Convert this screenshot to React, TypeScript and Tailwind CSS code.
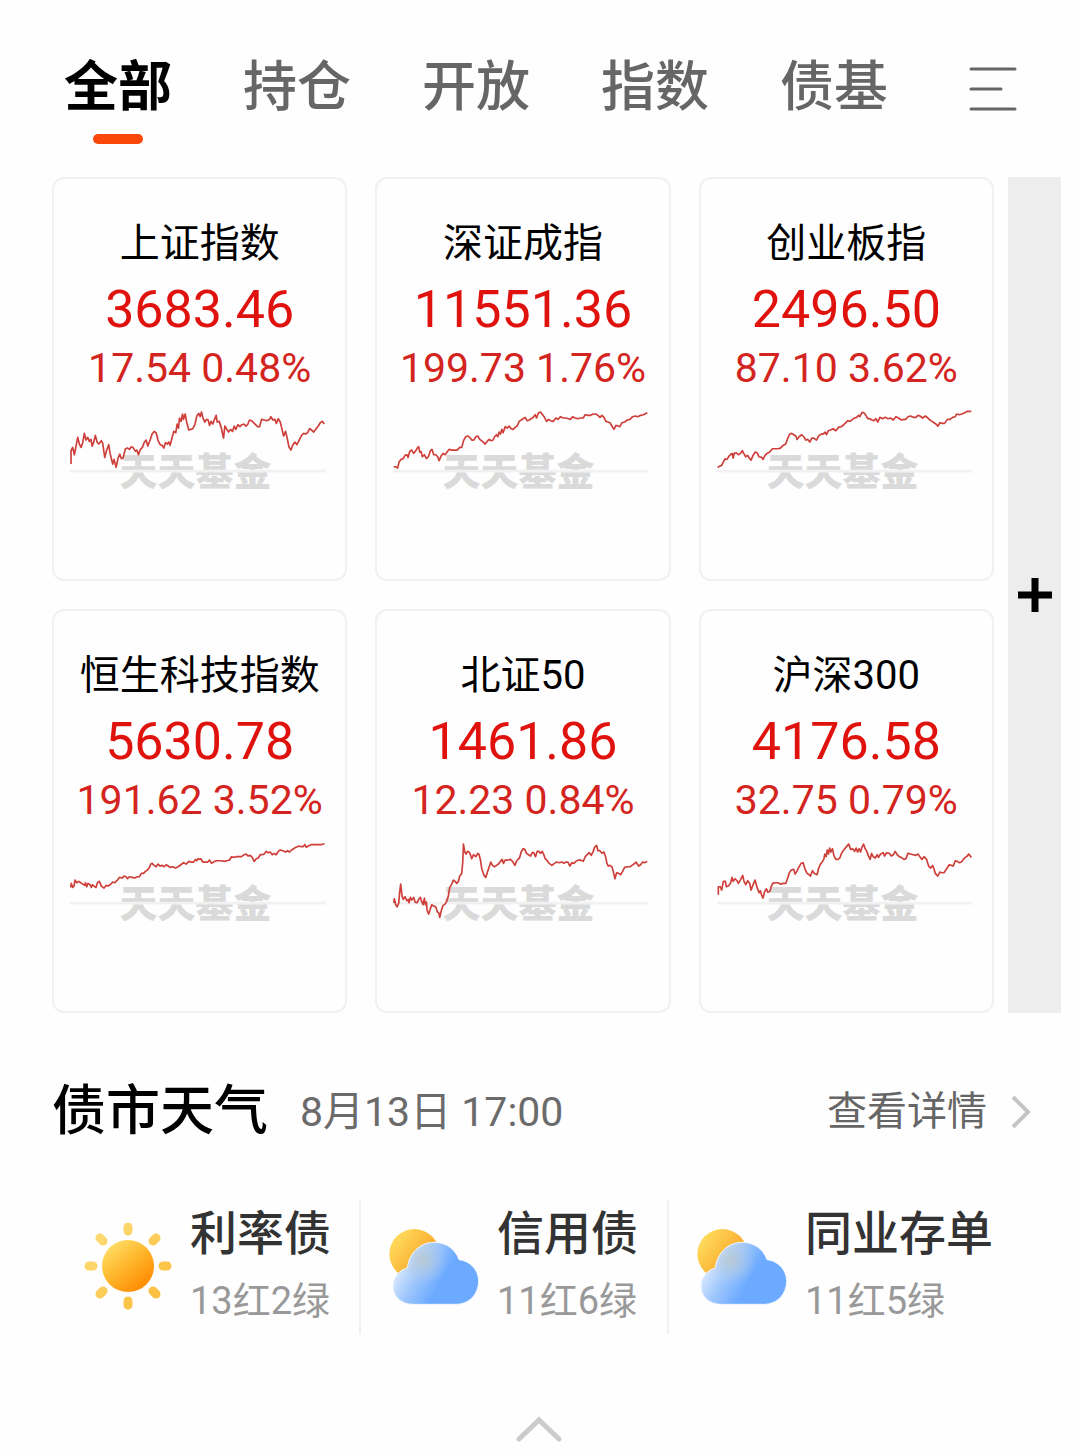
import React from "react";

interface IndexCard {
  name: string;
  value: string;
  change: string;
  points: string;
}

const tabs = ["全部", "持仓", "开放", "指数", "债基"];

const indexCards: IndexCard[] = [
  {
    name: "上证指数",
    value: "3683.46",
    change: "17.54 0.48%",
    points:
      "3,222 3,182 8,172 13,194 18,168 23,142 28,162 33,172 38,158 43,130 48,150 53,142 58,154 63,148 66,168 71,156 76,136 81,156 86,162 94,152 98,160 104,202 110,180 116,164 120,190 124,206 128,222 132,208 138,232 144,204 149,192 154,206 159,204 166,176 172,174 178,178 184,170 190,174 196,184 200,180 205,194 211,178 217,172 222,158 228,150 233,168 240,150 246,132 252,124 258,128 264,152 270,164 276,166 281,174 286,158 292,162 296,156 300,166 305,146 311,124 317,128 321,102 325,114 328,84 333,94 337,72 340,88 345,72 350,98 356,120 362,118 368,116 374,104 380,78 386,70 390,80 394,66 399,86 404,96 409,88 414,90 418,106 423,94 428,102 433,88 438,76 441,96 447,94 453,112 456,126 460,144 464,108 470,118 475,126 481,118 487,124 492,108 497,118 503,104 509,110 515,104 521,102 527,108 532,104 538,90 544,92 550,98 556,104 562,110 568,110 574,88 582,90 590,92 598,88 602,80 608,90 614,88 618,100 624,86 630,96 634,112 640,138 646,124 652,150 656,170 662,180 668,164 674,156 680,164 686,152 694,136 700,130 706,132 712,128 718,116 724,120 730,126 736,118 744,108 750,98 756,94 762,102",
  },
  {
    name: "深证成指",
    value: "11551.36",
    change: "199.73 1.76%",
    points:
      "2,230 8,230 14,234 18,216 24,208 30,206 36,196 42,194 45,202 50,184 56,180 62,190 68,182 74,172 77,170 80,186 84,184 88,200 94,194 100,206 106,200 112,182 117,178 122,194 128,194 134,200 138,212 144,198 150,190 156,194 162,186 168,178 176,180 184,180 192,180 200,172 206,172 212,150 218,140 224,138 230,142 236,150 242,150 248,140 254,138 260,148 268,154 276,162 282,154 288,148 294,152 300,150 304,140 310,134 314,140 318,126 322,132 326,118 330,128 336,110 342,114 348,108 354,116 360,118 366,112 372,108 378,94 384,90 390,86 396,82 402,92 408,90 414,86 420,82 426,74 430,84 436,68 442,66 448,74 454,82 460,94 466,88 472,92 480,94 488,84 494,88 502,80 510,84 518,84 526,86 532,88 538,80 546,84 554,86 562,84 570,84 576,74 584,76 592,76 600,72 608,72 614,76 620,82 626,76 632,82 638,94 644,96 650,98 656,108 662,118 668,106 674,108 680,110 686,98 694,96 702,90 710,88 718,80 726,78 734,80 742,76 750,74 762,68",
  },
  {
    name: "创业板指",
    value: "2496.50",
    change: "87.10 3.62%",
    points:
      "2,232 8,228 14,226 20,214 24,206 30,208 36,198 42,192 46,190 48,204 52,190 58,188 64,194 70,190 76,182 80,190 86,200 92,196 98,206 102,210 108,196 114,186 120,188 126,200 134,202 138,208 144,196 150,190 158,186 166,176 174,176 182,176 190,174 198,166 206,162 212,144 218,132 224,130 230,134 236,138 240,148 246,140 254,134 260,140 266,150 272,148 278,156 284,144 290,144 298,150 304,138 312,132 318,132 324,126 328,134 334,122 340,120 348,116 356,122 364,112 372,110 380,104 386,98 392,92 398,94 406,88 412,84 418,82 424,76 428,80 434,68 440,68 446,76 452,86 458,86 464,90 470,92 476,86 482,96 488,82 496,86 504,82 512,86 520,84 528,90 536,80 544,84 552,90 560,88 566,88 572,80 580,78 588,82 596,82 602,76 608,78 616,84 624,78 632,84 638,90 644,94 650,98 656,102 662,108 668,98 674,100 682,100 690,88 698,88 706,82 714,80 718,72 726,74 734,72 742,68 750,64 762,64",
  },
  {
    name: "恒生科技指数",
    value: "5630.78",
    change: "191.62 3.52%",
    points:
      "2,196 4,184 8,196 12,192 15,174 20,182 26,178 32,182 38,186 44,190 46,182 50,194 54,184 60,188 64,196 68,188 74,194 78,196 82,182 88,178 94,192 102,198 108,190 114,192 120,188 128,180 134,182 142,174 148,166 156,168 162,162 168,164 172,170 178,164 186,166 194,168 202,164 208,164 214,154 220,154 226,148 232,144 238,136 242,126 246,124 252,130 258,134 264,126 270,132 276,130 282,134 288,128 294,132 300,136 308,134 316,138 324,134 332,128 340,122 348,126 356,118 362,120 370,120 376,112 380,116 384,110 388,112 392,110 398,120 404,120 412,120 418,114 424,124 430,120 438,116 446,116 454,116 462,118 470,116 478,114 484,104 490,106 498,104 506,104 514,104 522,98 528,96 534,102 540,100 546,106 552,118 558,110 564,108 570,98 576,98 582,96 588,88 594,92 600,90 606,98 612,94 618,98 624,88 630,84 638,86 646,90 652,86 658,90 664,84 670,80 676,76 682,74 686,72 692,74 698,74 704,68 708,76 714,72 722,68 732,68 742,68 752,68 760,66 762,64",
  },
  {
    name: "北证50",
    value: "1461.86",
    change: "12.23 0.84%",
    points:
      "2,242 4,230 8,248 12,254 17,244 20,210 23,186 27,222 31,232 36,224 42,236 46,232 48,242 52,226 56,234 62,226 66,240 72,242 78,230 82,226 86,238 90,248 94,228 97,248 100,240 102,264 107,276 112,260 116,248 122,252 128,254 133,270 137,272 140,286 145,264 150,250 156,246 161,238 166,220 170,196 176,186 181,174 186,178 191,184 196,178 200,162 206,154 209,120 211,66 215,90 219,96 223,88 228,90 232,98 236,110 241,98 248,104 254,94 258,98 262,114 266,140 270,152 273,160 278,166 283,150 289,132 293,120 298,130 304,134 310,130 316,126 322,118 327,112 331,124 336,114 344,114 352,112 358,118 365,130 370,118 374,112 379,108 384,90 390,80 395,82 400,94 406,98 412,102 417,92 422,92 427,104 432,88 437,88 442,94 447,88 452,98 456,110 462,116 468,124 476,130 484,124 490,120 498,122 506,120 512,124 518,120 524,120 530,132 536,122 542,124 548,118 556,114 562,114 570,118 576,104 582,98 588,92 594,100 600,88 604,76 610,70 614,86 620,86 626,94 632,90 637,104 641,124 645,132 650,130 656,134 660,148 665,170 670,152 676,154 682,158 688,148 694,136 702,134 710,134 716,130 722,126 728,120 736,132 742,128 748,120 754,122 762,118",
  },
  {
    name: "沪深300",
    value: "4176.58",
    change: "32.75 0.79%",
    points:
      "4,218 4,194 10,194 14,204 19,178 25,178 28,194 34,192 40,184 45,166 48,178 54,170 60,176 64,184 70,174 77,160 81,178 86,188 92,176 98,184 102,204 108,188 114,174 120,196 126,212 130,206 134,220 138,228 142,210 148,200 152,210 158,208 163,192 167,184 174,182 182,182 190,186 198,184 206,184 211,170 216,154 222,144 230,142 234,156 240,146 246,134 252,124 258,122 264,142 270,154 276,158 280,162 286,146 292,154 300,158 304,140 310,126 315,120 320,112 323,96 327,104 330,84 334,96 337,78 341,90 346,80 350,100 356,112 362,112 368,108 373,94 378,86 386,76 391,70 395,66 400,82 406,80 412,88 417,78 421,90 426,80 430,90 435,74 439,66 444,80 449,88 453,100 459,112 463,94 468,104 474,108 480,98 484,106 490,96 498,92 502,102 508,92 516,94 522,102 528,98 534,88 540,98 546,104 552,106 560,112 566,110 572,94 580,96 588,98 596,100 602,96 608,104 614,112 620,104 628,112 634,132 640,138 646,130 650,140 654,154 661,162 668,150 674,152 680,152 688,140 696,128 702,130 708,132 714,116 720,118 726,122 732,120 738,112 744,106 750,102 754,96 762,106",
  },
];

const forecasts = [
  { name: "利率债", summary: "13红2绿", icon: "sun" },
  { name: "信用债", summary: "11红6绿", icon: "cloud" },
  { name: "同业存单", summary: "11红5绿", icon: "cloud" },
];

function Sparkline({ points }: { points: string }) {
  return (
    <svg viewBox="0 0 777 330" className="block w-full" aria-hidden="true">
      <text x="148" y="286" fontSize="114" className="fill-[#dadada] font-black">
        天天基金
      </text>
      <path d="M0 243H766" stroke="#f1f1f1" strokeWidth="8" />
      <polyline points={points} fill="none" stroke="#cf3f3a" strokeWidth="5" strokeLinejoin="round" />
    </svg>
  );
}

function SunIcon() {
  return (
    <svg viewBox="0 0 88 88" className="size-[88px] shrink-0" aria-hidden="true">
      <defs>
        <linearGradient id="sun-core" x1="0.15" y1="0.1" x2="0.8" y2="0.9">
          <stop offset="0" stopColor="#ffdd63" />
          <stop offset="0.5" stopColor="#ffb52b" />
          <stop offset="1" stopColor="#ff8c00" />
        </linearGradient>
        <linearGradient id="sun-rays" gradientUnits="userSpaceOnUse" x1="0" y1="0" x2="88" y2="88">
          <stop offset="0" stopColor="#fde07c" />
          <stop offset="1" stopColor="#fbb935" />
        </linearGradient>
      </defs>
      <path
        d="M44 4v4M44 78v4M5 43h4M79 43h4M16 15l3 3M69 68l3 3M72 15l-3 3M19 68l-3 3"
        stroke="url(#sun-rays)"
        strokeWidth="9"
        strokeLinecap="round"
      />
      <circle cx="44" cy="43" r="26" fill="url(#sun-core)" />
    </svg>
  );
}

function CloudIcon() {
  const id = React.useId();
  const cloud =
    "M130 225H-1C-37 225 -60 200 -60 171C-60 145 -43 123 -17 116C-12 72 21 39 63 39C98 39 126 58 138 91C170 94 197 121 197 155C197 195 168 225 130 225Z";
  return (
    <svg viewBox="-72 0 270 226" className="h-[76px] w-[90px] shrink-0" aria-hidden="true">
      <defs>
        <linearGradient id={`${id}-sun`} x1="0.1" y1="0.2" x2="0.9" y2="0.8">
          <stop offset="0" stopColor="#ffda5c" />
          <stop offset="1" stopColor="#f79a1c" />
        </linearGradient>
        <linearGradient id={`${id}-cloud`} gradientUnits="userSpaceOnUse" x1="-50" y1="90" x2="80" y2="165">
          <stop offset="0" stopColor="#eaf3ff" />
          <stop offset="0.5" stopColor="#a3c9fc" />
          <stop offset="1" stopColor="#6caaff" />
        </linearGradient>
        <radialGradient id={`${id}-glow`} gradientUnits="userSpaceOnUse" cx="30" cy="92" r="75">
          <stop offset="0" stopColor="#b9c8ce" stopOpacity="0.9" />
          <stop offset="1" stopColor="#b4cdec" stopOpacity="0" />
        </radialGradient>
      </defs>
      <circle cx="4" cy="74" r="75" fill={`url(#${id}-sun)`} />
      <path d={cloud} fill={`url(#${id}-cloud)`} />
      <path d={cloud} fill={`url(#${id}-glow)`} stroke="#f1f7ff" strokeWidth="3" />
    </svg>
  );
}

export default function App() {
  return (
    <main className="min-h-screen bg-[#fefefe] font-[Roboto,'Noto_Sans_CJK_SC',sans-serif] text-black">
      {/* Category tabs */}
      <nav className="flex items-start gap-[71px] pt-[54px] pr-[60px] pl-16 text-[54px] leading-[68px]">
        {tabs.map((tab, idx) => (
          <button
            key={tab}
            type="button"
            className={idx === 0 ? "flex flex-col items-center gap-3 font-bold" : "font-medium text-[#666]"}
          >
            {tab}
            {idx === 0 && <span className="h-[10px] w-[50px] rounded-full bg-[#fb4709]" />}
          </button>
        ))}
        <button type="button" aria-label="菜单" className="ml-auto flex h-[70px] items-center">
          <svg viewBox="0 0 48 44" className="h-11 w-12" aria-hidden="true">
            <path
              d="M2 2h44M2 22h30M2 42h44"
              stroke="#666"
              strokeWidth="3"
              strokeLinecap="round"
            />
          </svg>
        </button>
      </nav>

      {/* Index cards */}
      <section className="mt-[33px] flex gap-[14px] pr-4 pl-[52px]">
        <div className="grid flex-1 grid-cols-3 gap-7">
          {indexCards.map((card) => (
            <article
              key={card.name}
              className="rounded-xl border-2 border-[#f1f1f1] px-4 pt-9 pb-[79px] text-center whitespace-nowrap"
            >
              <h3 className="text-[40px] leading-[58px]">{card.name}</h3>
              <p className="text-[52px] leading-[74px] text-[#e0120d]">{card.value}</p>
              <p className="text-[41px] leading-[43px] text-[#d42420]">{card.change}</p>
              <Sparkline points={card.points} />
            </article>
          ))}
        </div>
        <button type="button" aria-label="添加" className="flex w-[53px] items-center justify-center bg-[#ededed]">
          <svg viewBox="0 0 34 34" className="size-[34px]" aria-hidden="true">
            <path d="M17 0v34M0 17h34" stroke="#000" strokeWidth="7" />
          </svg>
        </button>
      </section>

      {/* Bond market weather */}
      <section className="pr-[46px] pl-[52px]">
        <header className="mt-[65px] flex items-center leading-[68px]">
          <h2 className="text-[54px] font-medium">债市天气</h2>
          <time className="ml-8 text-[41px] text-[#6b6b6b]">8月13日 17:00</time>
          <a href="#detail" className="ml-auto flex items-center gap-6 text-[40px] text-[#666]">
            查看详情
            <svg viewBox="0 0 20 34" className="h-[34px] w-5" aria-hidden="true">
              <path d="M2 2l15 15L2 32" fill="none" stroke="#c4c4c4" strokeWidth="4" />
            </svg>
          </a>
        </header>
        <div className="mt-[54px] grid grid-cols-[309fr_308fr_362fr] divide-x-2 divide-[#f1f1f1] whitespace-nowrap">
          {forecasts.map((item) => (
            <div key={item.name} className="flex items-center gap-[18px] pl-7 first:pl-8">
              {item.icon === "sun" ? <SunIcon /> : <CloudIcon />}
              <div>
                <h3 className="text-[47px] leading-[68px] font-medium text-[#333]">{item.name}</h3>
                <p className="text-[38px] leading-[66px] text-[#999]">{item.summary}</p>
              </div>
            </div>
          ))}
        </div>
      </section>

      <button type="button" aria-label="收起" className="mx-auto mt-[82px] block">
        <svg viewBox="0 0 46 26" className="h-[26px] w-[46px]" aria-hidden="true">
          <path d="M3 23L23 4l20 19" fill="none" stroke="#cbcbcb" strokeWidth="5" strokeLinecap="round" />
        </svg>
      </button>
    </main>
  );
}
